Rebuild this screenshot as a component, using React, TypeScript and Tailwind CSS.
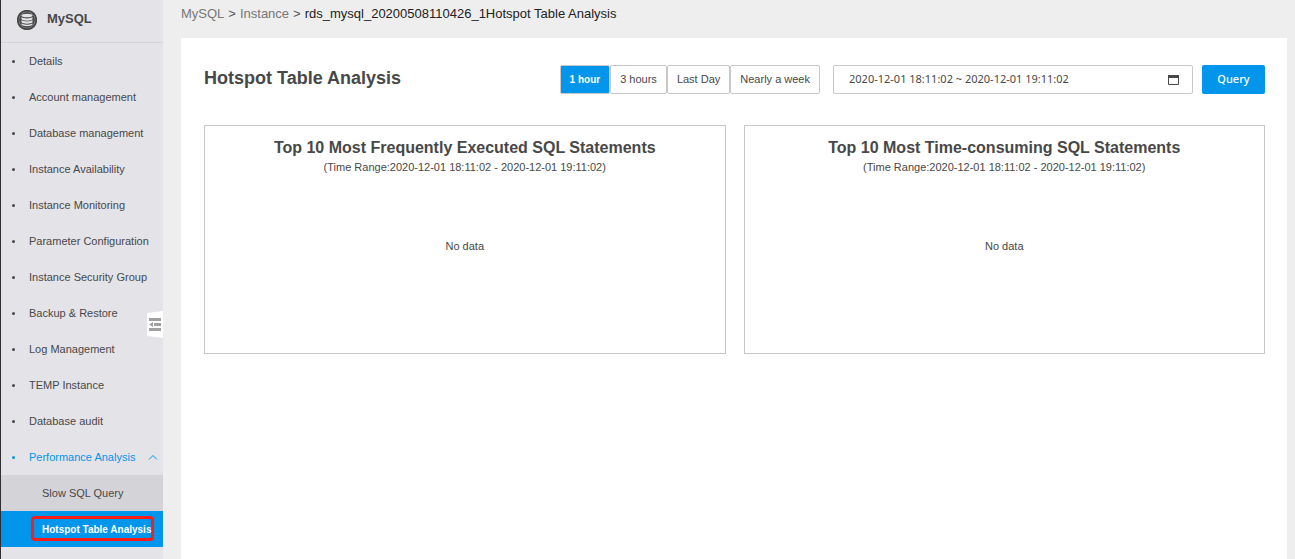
import React, { useState } from 'react';
import { clsx } from 'clsx';

const menuItems = [
  'Details',
  'Account management',
  'Database management',
  'Instance Availability',
  'Instance Monitoring',
  'Parameter Configuration',
  'Instance Security Group',
  'Backup & Restore',
  'Log Management',
  'TEMP Instance',
  'Database audit',
];

const ranges = ['1 hour', '3 hours', 'Last Day', 'Nearly a week'];

const charts = [
  'Top 10 Most Frequently Executed SQL Statements',
  'Top 10 Most Time-consuming SQL Statements',
];

function DatabaseLogo() {
  return (
    <svg viewBox="0 0 20 20" className="h-5 w-5 shrink-0" aria-hidden="true">
      <circle cx="10" cy="10" r="9.200" fill="#e4e3e8" stroke="#484848" strokeWidth="2" />
      <circle cx="10" cy="10" r="8" fill="#484848" />
      <ellipse cx="10" cy="5.500" rx="5.500" ry="1.800" fill="#e4e3e8" />
      <path d="M4.500 7c1 1.900 10 1.900 11 0v2.200c-1 1.900-10 1.900-11 0z" fill="#e4e3e8" />
      <path d="M4.500 10.100c1 1.900 10 1.900 11 0v2.200c-1 1.900-10 1.900-11 0z" fill="#e4e3e8" />
      <path d="M4.500 13.200c1 1.900 10 1.900 11 0v1.400c-1 2.200-10 2.200-11 0z" fill="#e4e3e8" />
    </svg>
  );
}

function CollapseHandle() {
  return (
    <button type="button" aria-label="Collapse menu" className="absolute right-0 top-[311px] h-[27px] w-4">
      <svg viewBox="0 0 16 27" className="h-full w-full">
        <path d="M0 2L16 0v27L0 25z" fill="#fff" />
        <path d="M2 7h12v3H2zM7 12h7v3H7zM2 17h12v3H2zM2 13.500l4-2.500v5z" fill="#a0a0a0" />
      </svg>
    </button>
  );
}

function Sidebar() {
  const [open, setOpen] = useState(true);

  return (
    <aside className="relative w-[163px] shrink-0 border-l border-[#303034] bg-[#e4e3e8]">
      <div className="flex h-[43px] items-center gap-[10px] border-b border-[#d3d2d7] pb-[2px] pl-4">
        <DatabaseLogo />
        <span className="pb-[2px] text-[13px] font-bold">MySQL</span>
      </div>
      <nav>
        <ul>
          {menuItems.map(item => (
            <li key={item}>
              <a href="#" className="flex h-9 items-center whitespace-nowrap pl-[11px]">
                <span className="mr-[14px] h-[3px] w-[3px] rounded-full bg-[#484848]" />
                {item}
              </a>
            </li>
          ))}
          <li>
            <button
              type="button"
              aria-expanded={open}
              onClick={() => setOpen(!open)}
              className="flex h-9 w-full items-center whitespace-nowrap pl-[11px] pr-[5px] text-[#0295ec]"
            >
              <span className="mr-[14px] h-[3px] w-[3px] rounded-full bg-[#0295ec]" />
              Performance Analysis
              <svg viewBox="0 0 10 6" className={clsx('ml-auto h-[6px] w-[10px]', !open && 'rotate-180')} fill="none" stroke="currentColor">
                <path d="M1 5.500l4-4 4 4" />
              </svg>
            </button>
            {open && (
              <ul>
                <li>
                  <a href="#" className="flex h-9 items-center bg-[#d4d3d8] pl-[41px]">Slow SQL Query</a>
                </li>
                <li>
                  <a href="#" className="flex h-9 items-center bg-[#0295ec] pb-[2px] pl-[30px] text-[10px] font-bold text-white">
                    <span className="flex h-[25px] w-[123px] items-center whitespace-nowrap rounded-sm border-[3px] border-[#fb1d18] pl-2 pt-[2px]">
                      Hotspot Table Analysis
                    </span>
                  </a>
                </li>
              </ul>
            )}
          </li>
        </ul>
      </nav>
      <CollapseHandle />
    </aside>
  );
}

export default function App() {
  const [range, setRange] = useState('1 hour');

  return (
    <div className="flex min-h-screen bg-[#eeeeee] font-['Liberation_Sans',Arial,sans-serif] text-[11px] text-[#484848]">
      <Sidebar />

      <div className="flex min-w-0 flex-1 flex-col pl-[18px] pr-2">
        <nav aria-label="Breadcrumb" className="flex h-[38px] gap-1 pt-1 text-[13px] leading-5 text-[#222]">
          <a href="#" className="text-[#777]">MySQL</a>
          <span className="text-[#555]">&gt;</span>
          <a href="#" className="text-[#777]">Instance</a>
          <span className="text-[#555]">&gt;</span>
          <span>rds_mysql_20200508110426_1Hotspot Table Analysis</span>
        </nav>

        <main className="flex-1 bg-white pb-6 pl-[23px] pr-[22px] pt-[27px]">
          <div className="flex items-center">
            <h1 className="mr-auto whitespace-nowrap pb-1 text-lg font-bold leading-6">Hotspot Table Analysis</h1>

            <div className="flex">
              {ranges.map(label => (
                <button
                  key={label}
                  type="button"
                  onClick={() => setRange(label)}
                  className={clsx(
                    'h-[29px] whitespace-nowrap rounded-xs border border-[#c8c8c8] px-[9px]',
                    range === label ? 'bg-[#0295ec] text-[10px] font-bold text-white' : 'bg-white'
                  )}
                >
                  {label}
                </button>
              ))}
            </div>

            <div className="ml-[13px] flex h-[29px] w-[360px] items-center rounded-xs border border-[#c8c8c8] pl-[15px] pr-[13px]">
              <input
                type="text"
                aria-label="Time range"
                defaultValue="2020-12-01 18:11:02 ~ 2020-12-01 19:11:02"
                className="min-w-0 flex-1 bg-transparent font-['Noto_Sans',sans-serif] outline-none"
              />
              <svg viewBox="0 0 11 10" className="h-[10px] w-[11px]" aria-hidden="true">
                <path d="M.5.500h10v9H.500z" fill="none" stroke="#484848" />
                <path d="M0 0h11v3H0z" fill="#484848" />
              </svg>
            </div>

            <button type="button" className="ml-[9px] h-[29px] w-[63px] rounded-xs bg-[#0295ec] font-['Noto_Sans',sans-serif] font-medium text-white">
              Query
            </button>
          </div>

          <div className="mt-[31px] grid grid-cols-2 gap-[18px]">
            {charts.map(title => (
              <section key={title} className="h-[229px] border border-[#c8c8c8] pt-3 text-center">
                <h2 className="text-base font-bold leading-5">{title}</h2>
                <p className="leading-[18px]">(Time Range:2020-12-01 18:11:02 - 2020-12-01 19:11:02)</p>
                <p className="mt-[61px] leading-[18px]">No data</p>
              </section>
            ))}
          </div>
        </main>
      </div>
    </div>
  );
}
